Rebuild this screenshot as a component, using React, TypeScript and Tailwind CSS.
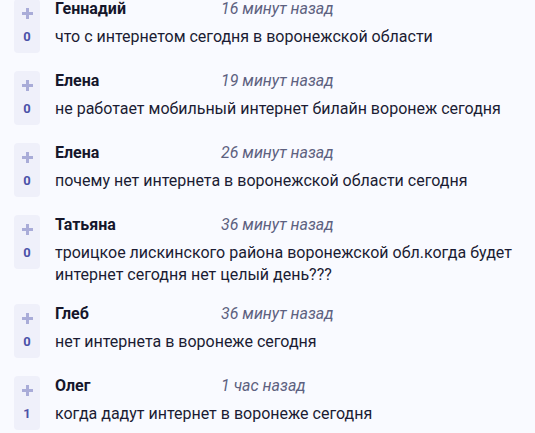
import React from "react";

const items = [
  { name: "Геннадий", time: "16 минут назад", text: ["что с интернетом сегодня в воронежской области"], votes: 0 },
  { name: "Елена", time: "19 минут назад", text: ["не работает мобильный интернет билайн воронеж сегодня"], votes: 0 },
  { name: "Елена", time: "26 минут назад", text: ["почему нет интернета в воронежской области сегодня"], votes: 0 },
  { name: "Татьяна", time: "36 минут назад", text: ["троицкое лискинского района воронежской обл.когда будет", "интернет сегодня нет целый день???"], votes: 0 },
  { name: "Глеб", time: "36 минут назад", text: ["нет интернета в воронеже сегодня"], votes: 0 },
  { name: "Олег", time: "1 час назад", text: ["когда дадут интернет в воронеже сегодня"], votes: 1 },
];

export default function App() {
  return (
    <div className="w-[535px] h-[433px] overflow-hidden bg-[#f9faff]" style={{ fontFamily: "Roboto, 'Noto Sans', sans-serif" }}>
      <div className="flex flex-col gap-[18px] pl-[14px] mt-[-1px]">
        {items.map((it, i) => (
          <div key={i} className="flex items-start">
            <div className="w-[26px] h-[54px] shrink-0 rounded-[4px] bg-[#eff0fa] flex flex-col items-center">
              <svg className="mt-[9px]" width="11" height="11" viewBox="0 0 11 11">
                <rect x="4" y="0" width="3" height="11" fill="#a9acd8" />
                <rect x="0" y="4" width="11" height="3" fill="#a9acd8" />
              </svg>
              <div className="mt-[10px] text-[13px] leading-[16px] font-bold text-[#4b52a8]">{it.votes}</div>
            </div>
            <div className="ml-[15px] flex flex-col">
              <div className="flex h-[20px] items-center">
                <div className="w-[166px] text-[16px] font-bold text-[#15162b]">{it.name}</div>
                <div className="text-[16px] italic text-[#5d6180]">{it.time}</div>
              </div>
              <div className="mt-[7px] text-[16px] leading-[22px] text-[#1b1c33]">
                {it.text.map((t, j) => (
                  <div key={j}>{t}</div>
                ))}
              </div>
            </div>
          </div>
        ))}
      </div>
    </div>
  );
}
